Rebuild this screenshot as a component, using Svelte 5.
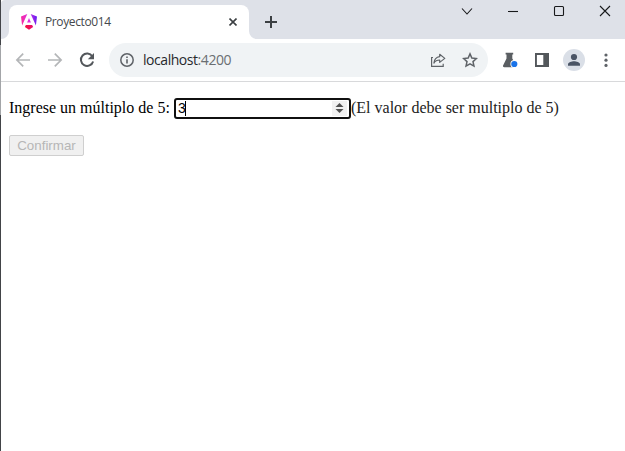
<script>
  const title = 'Proyecto014';
  let value = $state('3');
  let invalid = $derived(Number(value) % 5 !== 0);
</script>

<div class="window">
  <div class="edge"><i></i></div>
  <div class="browser">
    <header class="tabs">
      <div class="tab">
        <svg class="logo" width="16" height="16" viewBox="0 0 16 16">
          <defs>
            <linearGradient id="wings" gradientUnits="userSpaceOnUse" x1="1" y1="5" x2="15" y2="3">
              <stop offset="0" stop-color="#f42ba6" />
              <stop offset="0.5" stop-color="#dc30e4" />
              <stop offset="1" stop-color="#6a20f0" />
            </linearGradient>
            <linearGradient id="chin" x1="0" y1="0" x2="1" y2="0">
              <stop offset="0" stop-color="#f60f3e" />
              <stop offset="1" stop-color="#e80c70" />
            </linearGradient>
          </defs>
          <path fill="url(#wings)" d="M6.300 0 1.100 11.500 0 2.400ZM9.700 0 16 2.400 14.900 11.500ZM8 4l1.900 4.500H6.100Z" />
          <path fill="url(#chin)" d="M4.900 11h6.200l1 2.100L8 15.700l-4.100-2.600Z" />
        </svg>
        <span class="title">{title}</span>
        <svg class="close" width="8" height="8" viewBox="0 0 8 8"><path d="M.5.5l7 7M7.500.5l-7 7" stroke="#3c4043" stroke-width="1.600" /></svg>
        <svg class="flare" width="8" height="8" viewBox="0 0 8 8"><path fill="#fff" d="M0 0A8 8 0 0 0 8 8H0Z" /></svg>
        <svg class="flare left" width="8" height="8" viewBox="0 0 8 8"><path fill="#fff" d="M8 0A8 8 0 0 1 0 8H8Z" /></svg>
      </div>
      <svg class="plus" width="12" height="12" viewBox="0 0 12 12"><path d="M6 0v12M0 6h12" stroke="#3c4043" stroke-width="2" /></svg>
      <div class="controls">
        <span><svg width="12" height="12" viewBox="0 0 12 12"><path d="m1 3.500 5 5.500 5-5.500" /></svg></span>
        <span><svg width="12" height="12" viewBox="0 0 12 12"><path d="M1 6.500h10" /></svg></span>
        <span><svg width="12" height="12" viewBox="0 0 12 12"><rect x="1.500" y="1.500" width="9" height="9" rx="1" /></svg></span>
        <span><svg width="12" height="12" viewBox="0 0 12 12"><path d="m1 1 10 10M11 1 1 11" /></svg></span>
      </div>
    </header>

    <nav class="toolbar">
      <span class="tool"><svg width="16" height="16" viewBox="0 0 16 16"><path d="M15 8H2.500M8.200 1.700 1.900 8l6.300 6.300" fill="none" stroke="#b4b6b8" stroke-width="1.700" /></svg></span>
      <span class="tool"><svg width="16" height="16" viewBox="0 0 16 16"><path d="M1 8h12.500M7.800 1.700 14.100 8l-6.300 6.300" fill="none" stroke="#b4b6b8" stroke-width="1.700" /></svg></span>
      <span class="tool"><svg width="16" height="16" viewBox="0 0 16 16"><path d="M13.300 4.300A6.200 6.200 0 1 0 14.100 9.400" fill="none" stroke="#53575b" stroke-width="2" /><path fill="#53575b" d="M15 1v6.200H8.800Z" /></svg></span>
      <div class="omnibox">
        <svg width="14" height="14" viewBox="0 0 14 14"><circle cx="7" cy="7" r="6.200" fill="none" stroke="#5f6368" stroke-width="1.500" /><path d="M7 6.200v4.200M7 3.500v1.600" stroke="#5f6368" stroke-width="1.600" /></svg>
        <span class="url">localhost<em>:4200</em></span>
        <svg class="share" width="16" height="16" viewBox="0 0 16 16"><path d="M3 5.500H1.600v8.800h11.600v-2.500" fill="none" stroke="#5f6368" stroke-width="1.200" /><path d="M9.700 2.300 14.800 6.400l-5.100 4V8C7 8 5.200 8.900 3.900 11.100 4.300 7.500 6.200 5.200 9.700 4.700Z" fill="none" stroke="#5f6368" stroke-width="1.200" stroke-linejoin="round" /></svg>
        <svg width="16" height="16" viewBox="0 0 16 16"><path d="m8 1.900 1.850 4.150 4.550.5-3.400 3.050.95 4.450L8 11.750l-3.950 2.300L5 9.600 1.600 6.550l4.550-.5Z" fill="none" stroke="#5f6368" stroke-width="1.500" /></svg>
      </div>
      <span class="tool lab"><svg width="16" height="16" viewBox="0 0 16 16"><path fill="#5a5e62" d="M3.600.8h7.600v1.600h-.9v4l3.900 6.800c.6 1 .1 2-1 2H2.200c-1.100 0-1.600-1-1-2l3.300-6.600V2.400h-.9Z" /><circle cx="12.300" cy="12" r="3.900" fill="#fff" /><circle cx="12.300" cy="12" r="3.100" fill="#1a73e8" /></svg></span>
      <span class="tool"><svg width="16" height="16" viewBox="0 0 16 16"><path fill="#53575b" fill-rule="evenodd" d="M1 1h14v14H1ZM2.900 2.900v10.200h6.400V2.900Z" /></svg></span>
      <span class="tool"><svg width="22" height="22" viewBox="0 0 22 22"><circle cx="11" cy="11" r="11" fill="#dadfe7" /><circle cx="11" cy="8" r="3.100" fill="#4a5465" /><path fill="#4a5465" d="M5 16.700v-1.500c0-2 3.800-3 6-3s6 1 6 3v1.500Z" /></svg></span>
      <span class="tool"><svg width="16" height="16" viewBox="0 0 16 16" fill="#5f6368"><circle cx="8" cy="3" r="1.600" /><circle cx="8" cy="8.200" r="1.600" /><circle cx="8" cy="13.400" r="1.600" /></svg></span>
    </nav>

    <main>
      <div class="row">
        <span class="prompt">Ingrese un múltiplo de 5:</span>
        <div class="field">
          <span class="value">{value}</span><i class="caret"></i>
          <span class="spinner"><svg width="9" height="12" viewBox="0 0 9 12"><path fill="#505050" d="M.5 5 4.500 1l4 4ZM.5 7h8l-4 4Z" /></svg></span>
        </div>
        {#if invalid}<span class="error">(El valor debe ser multiplo de 5)</span>{/if}
      </div>
      <button disabled={invalid}>Confirmar</button>
    </main>
  </div>
</div>

<style>
  :global(body) { margin: 0; overflow: hidden; }
  .window { width: 625px; height: 451px; display: flex; background: #fff; overflow: hidden; }
  .edge { width: 1px; flex: none; background: #424448; display: flex; flex-direction: column; }
  .edge i { height: 70px; margin-top: 45px; background: #a3a5a8; }
  .browser { width: 624px; flex: none; }
  svg { display: block; flex: none; }
  .tabs { height: 39px; background: #dee1e8; display: flex; overflow: hidden; border-radius: 4px 0 0 0; }
  .tab {
    position: relative; box-sizing: border-box; width: 240px; height: 34px; margin: 5px 0 0 8px; padding: 0 12px;
    background: #fff; border-radius: 8px 8px 0 0; display: flex; align-items: center; flex: none;
  }
  .title { font: 12px/16px "Open Sans", "Noto Sans", sans-serif; color: #45484c; margin-left: 8px; letter-spacing: -0.38px; white-space: nowrap; }
  .close { margin-left: auto; }
  .flare { position: absolute; left: 240px; bottom: 0; }
  .flare.left { left: -8px; }
  .plus { margin: 16px 0 0 16px; }
  .controls { display: flex; height: 22px; margin-left: 167px; flex: none; }
  .controls span { width: 46px; display: flex; align-items: center; justify-content: center; }
  .controls path, .controls rect { fill: none; stroke: #18191b; stroke-width: 1.100; }
  .toolbar { box-sizing: border-box; height: 43px; border-bottom: 1px solid #d8d9db; padding-left: 6px; display: flex; align-items: center; }
  .tool { width: 32px; display: flex; justify-content: center; flex: none; }
  .omnibox {
    box-sizing: border-box; width: 379px; height: 34px; margin-left: 6px; border-radius: 17px; background: #f0f3f5;
    display: flex; align-items: center; padding: 0 10px 0 11px; flex: none;
  }
  .url { font: 14px/20px "Open Sans", "Noto Sans", sans-serif; color: #27292c; margin-left: 9px; letter-spacing: -0.45px; }
  .url em { font-style: normal; color: #6a6e72; }
  .share { margin: 0 16px 0 auto; }
  .lab { margin-left: 6px; }
  main { padding: 15px 8px; font: 16px/20px "Liberation Serif", "Times New Roman", serif; color: #000; }
  .row { display: flex; align-items: center; height: 22px; white-space: nowrap; }
  .prompt { width: 165px; flex: none; }
  .field {
    box-sizing: border-box; width: 177px; height: 21px; border: 2px solid #101010; border-radius: 3px; flex: none;
    display: flex; align-items: center; padding: 0 2px; font: 13.333px/17px "Liberation Sans", Arial, sans-serif;
  }
  .value { width: 7px; font-size: 14px; }
  .caret { width: 1px; height: 15px; background: #000; }
  .spinner { width: 15px; height: 15px; margin-left: auto; background: #f1f1f1; display: flex; align-items: center; justify-content: center; }
  .error { color: #222; }
  button {
    display: block; box-sizing: border-box; width: 75px; height: 21px; margin: 16px 0 0; padding: 0;
    border: 1px solid #cfcfcf; border-radius: 2px; background: #f0f0f0; color: #b6b6b6;
    font: 13.333px/17px "Liberation Sans", Arial, sans-serif;
  }
</style>
